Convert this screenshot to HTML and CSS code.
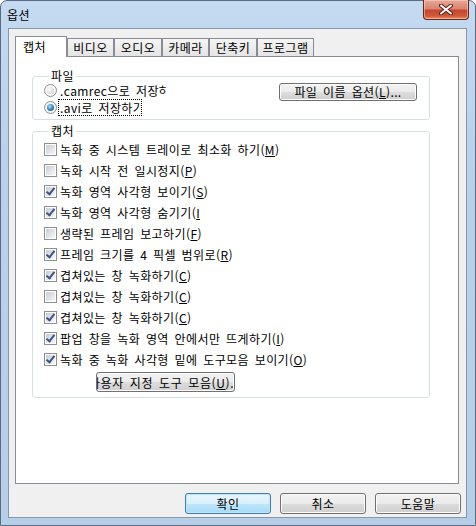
FILE: index.html
```html
<!DOCTYPE html>
<html lang="ko">
<head>
    <meta charset="UTF-8">
    <title>옵션</title>
    <link rel="stylesheet" href="styles.css">
</head>
<body>

<div class="window">
    <!-- 제목 표시줄 -->
    <div class="titlebar">
        <span class="title">옵션</span>
        <button class="close">
            <svg width="14" height="11" viewBox="0 0 14 11">
                <path d="M2 1.5 L12 9.5 M12 1.5 L2 9.5" stroke="#5a1f16" stroke-width="4" stroke-linecap="round"/>
                <path d="M2 1.5 L12 9.5 M12 1.5 L2 9.5" stroke="#fff" stroke-width="2" stroke-linecap="round"/>
            </svg>
        </button>
    </div>

    <div class="client">
        <div class="tabs">
            <div class="tab active">캡처</div>
            <div class="tab">비디오</div>
            <div class="tab">오디오</div>
            <div class="tab">카메라</div>
            <div class="tab">단축키</div>
            <div class="tab long">프로그램</div>
        </div>

        <div class="panel">
            <fieldset class="group file-group">
                <legend>파일</legend>
                <div class="file-row">
                    <div class="radios">
                        <label class="radio"><span class="rb"></span><span class="clip clip-a">.camrec으로 저장하기</span></label>
                        <label class="radio"><span class="rb on"></span><span class="clip clip-b focus">.avi로 저장하기</span></label>
                    </div>
                    <button class="btn name-btn">파일 이름 옵션(<u>L</u>)...</button>
                </div>
            </fieldset>

            <fieldset class="group capture-group">
                <legend>캡처</legend>
                <label class="check"><span class="cb"></span>녹화 중 시스템 트레이로 최소화 하기(<u>M</u>)</label>
                <label class="check"><span class="cb"></span>녹화 시작 전 일시정지(<u>P</u>)</label>
                <label class="check"><span class="cb on"></span>녹화 영역 사각형 보이기(<u>S</u>)</label>
                <label class="check"><span class="cb on"></span>녹화 영역 사각형 숨기기(<u>I</u></label>
                <label class="check"><span class="cb"></span>생략된 프레임 보고하기(<u>F</u>)</label>
                <label class="check"><span class="cb on"></span>프레임 크기를 4 픽셀 범위로(<u>R</u>)</label>
                <label class="check"><span class="cb on"></span>겹쳐있는 창 녹화하기(<u>C</u>)</label>
                <label class="check"><span class="cb"></span>겹쳐있는 창 녹화하기(<u>C</u>)</label>
                <label class="check"><span class="cb on"></span>겹쳐있는 창 녹화하기(<u>C</u>)</label>
                <label class="check"><span class="cb on"></span>팝업 창을 녹화 영역 안에서만 뜨게하기(<u>I</u>)</label>
                <label class="check"><span class="cb on"></span>녹화 중 녹화 사각형 밑에 도구모음 보이기(<u>O</u>)</label>
                <button class="btn toolbar-btn"><span>사용자 지정 도구 모음(<u>U</u>)...</span></button>
            </fieldset>
        </div>

        <!-- 하단 버튼 -->
        <div class="actions">
            <button class="btn action default">확인</button>
            <button class="btn action">취소</button>
            <button class="btn action">도움말</button>
        </div>
    </div>
</div>

</body>
</html>
```

FILE: styles.css
```css
body {
    margin: 0;
    width: 476px;
    height: 526px;
    overflow: hidden;
    font-family: "Noto Sans CJK KR", "Noto Sans", sans-serif;
    font-size: 12px;
    letter-spacing: 0.4px;
    word-spacing: 2px;
    color: #000;
    background: #fff;
}
.window {
    box-sizing: border-box;
    width: 476px;
    height: 526px;
    border: 1px solid #5b6c82;
    border-radius: 7px 7px 0 0;
    background: linear-gradient(to bottom, #c4daf1 0%, #b9d1ea 30%, #b6cee8 100%);
    display: flex;
    flex-direction: column;
}
.titlebar {
    height: 27px;
    display: flex;
    align-items: flex-start;
    padding-left: 6px;
}
.title {
    line-height: 27px;
}
.close {
    margin: -1px 6px 0 auto;
    width: 46px;
    height: 20px;
    padding: 0;
    border: 1px solid #6c2419;
    border-top: none;
    border-radius: 0 0 4px 4px;
    background: linear-gradient(to bottom, #e8a797 0%, #d98672 45%, #c7452d 55%, #cf5a3c 85%, #e9926b 100%);
    box-shadow: inset 0 0 0 1px rgba(255, 220, 200, 0.5);
    display: flex;
    align-items: center;
    justify-content: center;
}
.client {
    box-sizing: border-box;
    height: 490px;
    margin: 0 8px 0 7px;
    border: 1px solid #8597ad;
    background: #f0f0f0;
    display: flex;
    flex-direction: column;
}

/* 탭 */
.tabs {
    display: flex;
    height: 20px;
    margin: 7px 0 0 6px;
}
.tab {
    box-sizing: border-box;
    width: 47px;
    height: 18px;
    margin-top: 2px;
    line-height: 17px;
    text-align: center;
    border: 1px solid #898c95;
    border-bottom: none;
    background: linear-gradient(to bottom, #f5f5f5, #e4e4e4);
}
.tab:nth-child(odd) {
    width: 48px;
}
.tab.long {
    width: 57px;
}
.tab.active {
    width: 52px;
    height: 21px;
    margin-top: 0;
    margin-bottom: -1px;
    padding: 0 12px 0 7px;
    line-height: 20px;
    text-align: left;
    background: #fff;
    position: relative;
    z-index: 1;
}
.panel {
    box-sizing: border-box;
    height: 428px;
    margin: 0 7px 0 6px;
    border: 1px solid #898c95;
    background: #fff;
    padding: 0 0 0 16px;
}

/* 그룹 상자 */
.group {
    margin: 0 28px 0 0;
    padding: 0 0 0 11px;
    border: 1px solid #d5dfe5;
    border-radius: 3px;
}
.group legend {
    margin-left: 5px;
    padding: 0 2px;
    line-height: 14px;
}
.file-group {
    margin-top: 12px;
    padding-bottom: 3px;
}
.capture-group {
    margin-top: 4px;
    padding-bottom: 5px;
}
.file-row {
    display: flex;
    align-items: flex-start;
}
.radios {
    display: flex;
    flex-direction: column;
    margin-top: -1px;
}
.radio, .check {
    display: flex;
    align-items: center;
    white-space: nowrap;
}
.radio {
    height: 17px;
}
.check {
    height: 21px;
}
.check:first-of-type {
    margin-top: 1px;
}
.clip {
    display: inline-block;
    overflow: hidden;
    line-height: 15px;
}
.clip-a {
    width: 106px;
    margin-left: 3px;
}
.clip-b {
    width: 79px;
    margin-left: 2px;
    padding-left: 1px;
    padding-right: 2px;
}
.focus {
    outline: 1px dotted #000;
}
.rb {
    box-sizing: border-box;
    flex: none;
    width: 13px;
    height: 13px;
    border: 1px solid #8e8f8f;
    border-radius: 50%;
    padding: 2px;
    background: radial-gradient(circle at 35% 35%, #fbfbfb, #c9ccd0) content-box, #f6f6f6;
}
.rb.on {
    background: radial-gradient(circle at 40% 35%, #a6e0f8, #2c78b8 60%, #17487a) content-box, #f6f6f6;
}
.cb {
    box-sizing: border-box;
    flex: none;
    width: 13px;
    height: 13px;
    margin-right: 3px;
    border: 1px solid #8e8f8f;
    padding: 1px;
    background: linear-gradient(135deg, #c8ccd2, #f8f8f8) content-box, #fff;
    position: relative;
}
.cb.on::after {
    content: "";
    position: absolute;
    left: 3px;
    top: 0;
    width: 3px;
    height: 7px;
    border: solid #3f5487;
    border-width: 0 2px 2px 0;
    transform: rotate(38deg);
}

/* 버튼 */
.btn {
    box-sizing: border-box;
    font: inherit;
    letter-spacing: inherit;
    word-spacing: inherit;
    color: #000;
    padding: 0;
    border: 1px solid #707070;
    border-radius: 3px;
    background: linear-gradient(to bottom, #f2f2f2 0%, #ebebeb 50%, #dddddd 51%, #cfcfcf 100%);
    box-shadow: inset 0 0 0 1px #fcfcfc;
    white-space: nowrap;
}
.name-btn {
    width: 138px;
    height: 18px;
    margin: 0 12px 0 auto;
    line-height: 14px;
}
.toolbar-btn {
    width: 139px;
    height: 20px;
    margin: 2px 0 0 52px;
    display: flex;
    justify-content: center;
    align-items: center;
    overflow: hidden;
}
.toolbar-btn span {
    flex: none;
    letter-spacing: 0.6px;
}
.actions {
    display: flex;
    justify-content: flex-end;
    gap: 9px;
    margin-top: 9px;
    padding-right: 5px;
}
.action {
    width: 86px;
    height: 21px;
}
.action.default {
    border-color: #3c7fb1;
    background: linear-gradient(to bottom, #eaf6fd 0%, #d9f0fc 50%, #bee6fd 51%, #a7d9f5 100%);
    box-shadow: inset 0 0 0 1px #c5e6f8;
}
```
